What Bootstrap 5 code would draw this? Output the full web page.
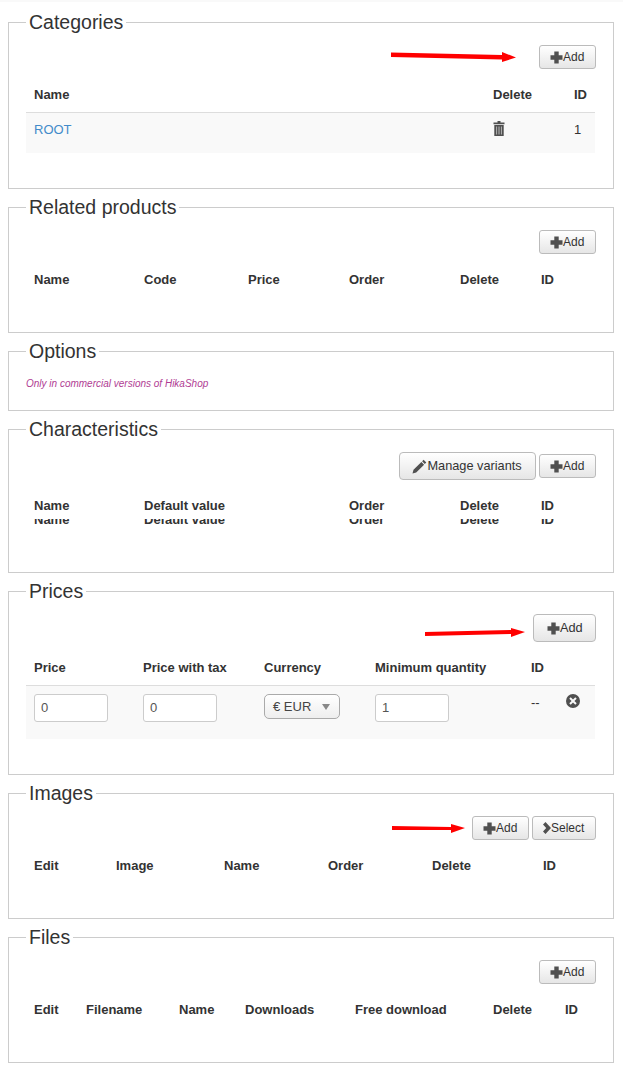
<!DOCTYPE html>
<html lang="en">
<head>
<meta charset="utf-8">
<title>Product options</title>
<link href="https://cdn.jsdelivr.net/npm/bootstrap@5.3.0/dist/css/bootstrap.min.css" rel="stylesheet">
<style>
body{font-family:"Liberation Sans",Arial,sans-serif;font-size:13px;color:#333;background:#fff;position:relative}
.topstrip{height:2px;background:#f9f9f9}
.pagewrap{padding:8px 9px 0 8px}
.fset{border:1px solid #ccc;margin:0 0 6px;padding:0 18px 35px 17px;min-width:0}
.fset legend{float:none;width:auto;margin:0;padding:0 3px;font-size:19.5px;line-height:24px;color:#333}
.tools{margin-top:11px;margin-bottom:8px;margin-right:-1px;gap:3px}
.hbtn{display:inline-flex;align-items:center;height:24px;padding:0 10.65px 0 10px;font-size:12px;line-height:1;color:#333;background:linear-gradient(#fff,#e6e6e6);border:1px solid #bbb;border-radius:3px}
.hbtn.big{height:28px;font-size:12.75px;border-radius:4px;padding:0 12.3px 0 13px}
.hbtn.big.wide{padding:0 13.3px 0 12px}
.gi{fill:#505050;display:block;flex:none}
.gridt{table-layout:fixed;width:569px;border-collapse:collapse;margin:0;font-size:13px}
.gridt th{padding:8px;font-weight:700;line-height:19px;color:#333;text-align:left;border:0}
.gridt td{padding:8px 8px 13px;line-height:19px;vertical-align:top;background:#f9f9f9;border-top:1px solid #ddd;color:#333}
.gridt td.txtcell{padding:7px 8px 14px}
.gridt a{color:#428bca;text-decoration:none}
.w35{width:35px}.w52{width:52px}.w66{width:66px}.w72{width:72px}.w81{width:81px}.w82{width:82px}.w93{width:93px}.w101{width:101px}.w104{width:104px}.w108{width:108px}.w109{width:109px}.w110{width:110px}.w111{width:111px}.w121{width:121px}.w138{width:138px}.w156{width:156px}.w205{width:205px}.w459{width:459px}
.fieldbox{display:block;width:74px;height:28px;padding:0 6px;border:1px solid #ccc;border-radius:3px;background:#fff;font-size:13px;line-height:26px;color:#555}
.pickbox{display:flex;align-items:center;justify-content:space-between;width:76px;height:25px;padding:0 9px 0 8px;border:1px solid #aaa;border-radius:5px;background:linear-gradient(#fff,#eee);font-size:13px;color:#444}
.pickarrow{width:0;height:0;border-left:4px solid transparent;border-right:4px solid transparent;border-top:6px solid #888}
.gridt .pricerow td{padding-bottom:17px}
.onlynote{margin:15px 0 0;font-size:10px;line-height:12px;font-style:italic;color:#b03c93}
.fset-note{padding-bottom:20px}
.ghosthead{height:18px;margin-top:-4px;overflow:hidden}
.ghosthead .gridt{margin-top:-17px}
.redarrow{position:absolute;left:0;top:0;pointer-events:none}
.trashbars{fill:#aaa}
</style>
</head>
<body>
<div class="topstrip"></div>
<div class="pagewrap">

<fieldset class="fset">
<legend>Categories</legend>
<div class="tools d-flex justify-content-end">
<button type="button" class="hbtn"><svg class="gi" width="13" height="13" viewBox="0 0 13 13"><path d="M4.300 .5h4.400v3.800h3.800v4.400H8.700v3.800H4.300V8.700H.5V4.300h3.800z"/></svg>Add</button>
</div>
<table class="gridt">
<colgroup><col class="w459"><col class="w81"><col></colgroup>
<thead><tr><th>Name</th><th>Delete</th><th>ID</th></tr></thead>
<tbody><tr><td class="txtcell"><a href="#">ROOT</a></td><td><svg class="gi" width="12" height="15" viewBox="0 0 12 15"><path d="M4.500 0h3v1.500h4v1.700H.5V1.500h4zM1.300 4h9.400v11H1.300z"/><path class="trashbars" d="M3 5.500h1.100v8H3zm2.400 0h1.200v8H5.400zm2.500 0H9v8H7.900z"/></svg></td><td class="txtcell">1</td></tr></tbody>
</table>
</fieldset>

<fieldset class="fset">
<legend>Related products</legend>
<div class="tools d-flex justify-content-end">
<button type="button" class="hbtn"><svg class="gi" width="13" height="13" viewBox="0 0 13 13"><path d="M4.300 .5h4.400v3.800h3.800v4.400H8.700v3.800H4.300V8.700H.5V4.300h3.800z"/></svg>Add</button>
</div>
<table class="gridt">
<colgroup><col class="w110"><col class="w104"><col class="w101"><col class="w111"><col class="w81"><col></colgroup>
<thead><tr><th>Name</th><th>Code</th><th>Price</th><th>Order</th><th>Delete</th><th>ID</th></tr></thead>
</table>
</fieldset>

<fieldset class="fset fset-note">
<legend>Options</legend>
<p class="onlynote">Only in commercial versions of HikaShop</p>
</fieldset>

<fieldset class="fset">
<legend>Characteristics</legend>
<div class="tools d-flex justify-content-end align-items-center">
<button type="button" class="hbtn big wide"><svg class="gi" width="15" height="15" viewBox="0 0 15 15"><path d="M11.600.8l2.700 2.700-1.500 1.500-2.700-2.700zM9.400 3l2.700 2.700-7.900 7.800L.5 14.500l1-3.700z"/></svg>Manage variants</button>
<button type="button" class="hbtn"><svg class="gi" width="13" height="13" viewBox="0 0 13 13"><path d="M4.300 .5h4.400v3.800h3.800v4.400H8.700v3.800H4.300V8.700H.5V4.300h3.800z"/></svg>Add</button>
</div>
<table class="gridt">
<colgroup><col class="w110"><col class="w205"><col class="w111"><col class="w81"><col></colgroup>
<thead><tr><th>Name</th><th>Default value</th><th>Order</th><th>Delete</th><th>ID</th></tr></thead>
</table>
<div class="ghosthead">
<table class="gridt">
<colgroup><col class="w110"><col class="w205"><col class="w111"><col class="w81"><col></colgroup>
<thead><tr><th>Name</th><th>Default value</th><th>Order</th><th>Delete</th><th>ID</th></tr></thead>
</table>
</div>
</fieldset>

<fieldset class="fset">
<legend>Prices</legend>
<div class="tools d-flex justify-content-end">
<button type="button" class="hbtn big"><svg class="gi" width="13" height="13" viewBox="0 0 13 13"><path d="M4.300 .5h4.400v3.800h3.800v4.400H8.700v3.800H4.300V8.700H.5V4.300h3.800z"/></svg>Add</button>
</div>
<table class="gridt">
<colgroup><col class="w109"><col class="w121"><col class="w111"><col class="w156"><col class="w35"><col></colgroup>
<thead><tr><th>Price</th><th>Price with tax</th><th>Currency</th><th>Minimum quantity</th><th>ID</th><th></th></tr></thead>
<tbody><tr class="pricerow">
<td><span class="fieldbox">0</span></td>
<td><span class="fieldbox">0</span></td>
<td><span class="pickbox">€ EUR<span class="pickarrow"></span></span></td>
<td><span class="fieldbox">1</span></td>
<td class="txtcell">--</td>
<td><svg class="gi" width="14" height="14" viewBox="0 0 14 14"><path fill-rule="evenodd" d="M7 0a7 7 0 1 1 0 14A7 7 0 0 1 7 0zM4.700 3.300L3.300 4.700 5.600 7 3.300 9.300l1.400 1.400L7 8.400l2.300 2.300 1.400-1.400L8.400 7l2.300-2.300-1.400-1.400L7 5.600z"/></svg></td>
</tr></tbody>
</table>
</fieldset>

<fieldset class="fset">
<legend>Images</legend>
<div class="tools d-flex justify-content-end">
<button type="button" class="hbtn"><svg class="gi" width="13" height="13" viewBox="0 0 13 13"><path d="M4.300 .5h4.400v3.800h3.800v4.400H8.700v3.800H4.300V8.700H.5V4.300h3.800z"/></svg>Add</button>
<button type="button" class="hbtn"><svg class="gi" width="8" height="12" viewBox="0 0 8 12"><path d="M0 2.500L2.500 0 8 6 2.500 12 0 9.500 3.200 6z"/></svg>Select</button>
</div>
<table class="gridt">
<colgroup><col class="w82"><col class="w108"><col class="w104"><col class="w104"><col class="w111"><col></colgroup>
<thead><tr><th>Edit</th><th>Image</th><th>Name</th><th>Order</th><th>Delete</th><th>ID</th></tr></thead>
</table>
</fieldset>

<fieldset class="fset">
<legend>Files</legend>
<div class="tools d-flex justify-content-end">
<button type="button" class="hbtn"><svg class="gi" width="13" height="13" viewBox="0 0 13 13"><path d="M4.300 .5h4.400v3.800h3.800v4.400H8.700v3.800H4.300V8.700H.5V4.300h3.800z"/></svg>Add</button>
</div>
<table class="gridt">
<colgroup><col class="w52"><col class="w93"><col class="w66"><col class="w110"><col class="w138"><col class="w72"><col></colgroup>
<thead><tr><th>Edit</th><th>Filename</th><th>Name</th><th>Downloads</th><th>Free download</th><th>Delete</th><th>ID</th></tr></thead>
</table>
</fieldset>

</div>
<svg class="redarrow" width="623" height="1080" viewBox="0 0 623 1080" fill="#f00">
<path d="M391 52.500L502 55V52L516 57.500 502 62V59.500L391 57z"/>
<path d="M425 632L511 630V628L525 632 511 637V634L425 636z"/>
<path d="M392 826L451 827V824L465 828 451 833V830L392 830z"/>
</svg>
<script src="https://cdn.jsdelivr.net/npm/bootstrap@5.3.0/dist/js/bootstrap.bundle.min.js"></script>
</body>
</html>
